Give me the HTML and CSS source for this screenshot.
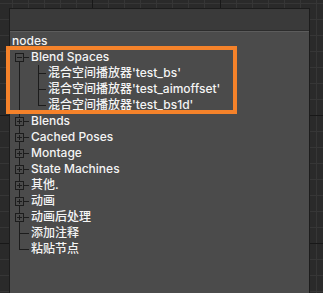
FILE: index.html
```html
<!DOCTYPE html>
<html>
 <head>
  <meta charset="utf-8">
  <title>nodes</title>
  <link rel="stylesheet" href="styles.css">
 </head>
<body>
<div class="panel">
 <div class="panel-head"></div>
 <div class="panel-body">
  <div class="row title"><span class="label">nodes</span></div>

  <div class="row"><span class="twig first"><span class="box"></span></span><span class="label">Blend Spaces</span></div>
  <div class="row"><span class="twig pass"></span><span class="twig2"></span><span class="label">混合空间播放器'test_bs'</span></div>
  <div class="row"><span class="twig pass"></span><span class="twig2"></span><span class="label">混合空间播放器'test_aimoffset'</span></div>
  <div class="row"><span class="twig pass"></span><span class="twig2 last"></span><span class="label">混合空间播放器'test_bs1d'</span></div>

  <div class="row"><span class="twig"><span class="box plus"></span></span><span class="label">Blends</span></div>
  <div class="row"><span class="twig"><span class="box plus"></span></span><span class="label">Cached Poses</span></div>
  <div class="row"><span class="twig"><span class="box plus"></span></span><span class="label">Montage</span></div>
  <div class="row"><span class="twig"><span class="box plus"></span></span><span class="label">State Machines</span></div>
  <div class="row"><span class="twig"><span class="box plus"></span></span><span class="label">其他.</span></div>
  <div class="row"><span class="twig"><span class="box plus"></span></span><span class="label">动画</span></div>
  <div class="row"><span class="twig"><span class="box plus"></span></span><span class="label">动画后处理</span></div>
  <div class="row"><span class="twig"></span><span class="label">添加注释</span></div>
  <div class="row"><span class="twig last"></span><span class="label">粘贴节点</span></div>
 </div>
 <div class="mark"></div>
</div>
</body>
</html>
```

FILE: styles.css
```css
html, body {
 margin: 0;
 height: 100%;
 overflow: hidden;
}
body {
 background-color: #2a2a2a;
 background-image:
  linear-gradient(90deg, #181818 1px, transparent 1px),
  linear-gradient(#181818 1px, transparent 1px),
  linear-gradient(90deg, #363636 1px, transparent 1px),
  linear-gradient(#363636 1px, transparent 1px);
 background-size: 128px 128px, 128px 128px, 16px 16px, 16px 16px;
 background-position: 92px 0, 0 115px, 12px 0, 0 3px;
 font-family: Inter, "Noto Sans CJK SC", sans-serif;
 font-size: 12px;
 font-weight: 500;
 color: #f4f4f4;
}

.panel {
 position: relative;
 box-sizing: border-box;
 margin: 8px 0 0 9px;
 width: 301px;
 height: 285px;
 border: 1px solid #1c1c1c;
 border-bottom: 0;
 background: #4b4b4b;
}
.panel-head {
 height: 21px;
 background: #3a3a3a;
 border-bottom: 1px solid #2c2c2c;
 box-shadow: 0 1px 0 #5c5c5c;
}
.panel-body {
 padding-top: 2px;
}

.row {
 display: flex;
 align-items: center;
 height: 16px;
 white-space: nowrap;
}
.label {
 line-height: 16px;
 padding-left: 2px;
}

/* tree guides */
.twig {
 flex: none;
 width: 19px;
 height: 16px;
 background:
  linear-gradient(#1c1c1c, #1c1c1c) no-repeat 9px 0 / 1px 16px,
  linear-gradient(#1c1c1c, #1c1c1c) no-repeat 9px 8px / 10px 1px;
}
.twig.first {
 background:
  linear-gradient(#1c1c1c, #1c1c1c) no-repeat 9px 8px / 1px 8px,
  linear-gradient(#1c1c1c, #1c1c1c) no-repeat 9px 8px / 10px 1px;
}
.twig.last {
 background:
  linear-gradient(#1c1c1c, #1c1c1c) no-repeat 9px 0 / 1px 9px,
  linear-gradient(#1c1c1c, #1c1c1c) no-repeat 9px 8px / 10px 1px;
}
.twig.pass {
 width: 21px;
 background: linear-gradient(#1c1c1c, #1c1c1c) no-repeat 9px 0 / 1px 16px;
}
.twig2 {
 flex: none;
 width: 15px;
 height: 16px;
 background:
  linear-gradient(#1c1c1c, #1c1c1c) no-repeat 7px 0 / 1px 16px,
  linear-gradient(#1c1c1c, #1c1c1c) no-repeat 7px 8px / 8px 1px;
}
.twig2.last {
 background:
  linear-gradient(#1c1c1c, #1c1c1c) no-repeat 7px 0 / 1px 9px,
  linear-gradient(#1c1c1c, #1c1c1c) no-repeat 7px 8px / 8px 1px;
}

.box {
 display: block;
 box-sizing: border-box;
 width: 9px;
 height: 9px;
 margin: 4px 0 0 5px;
 border: 1px solid #1c1c1c;
 background: linear-gradient(#1c1c1c, #1c1c1c) no-repeat 1px 3px / 5px 1px, #4b4b4b;
}
.box.plus {
 background:
  linear-gradient(#1c1c1c, #1c1c1c) no-repeat 1px 3px / 5px 1px,
  linear-gradient(#1c1c1c, #1c1c1c) no-repeat 3px 1px / 1px 5px,
  #4b4b4b;
}

/* annotation frame drawn over the tree */
.mark {
 position: absolute;
 left: -4px;
 top: 37px;
 width: 223px;
 height: 60px;
 border: 4px solid #f5822a;
}
```
